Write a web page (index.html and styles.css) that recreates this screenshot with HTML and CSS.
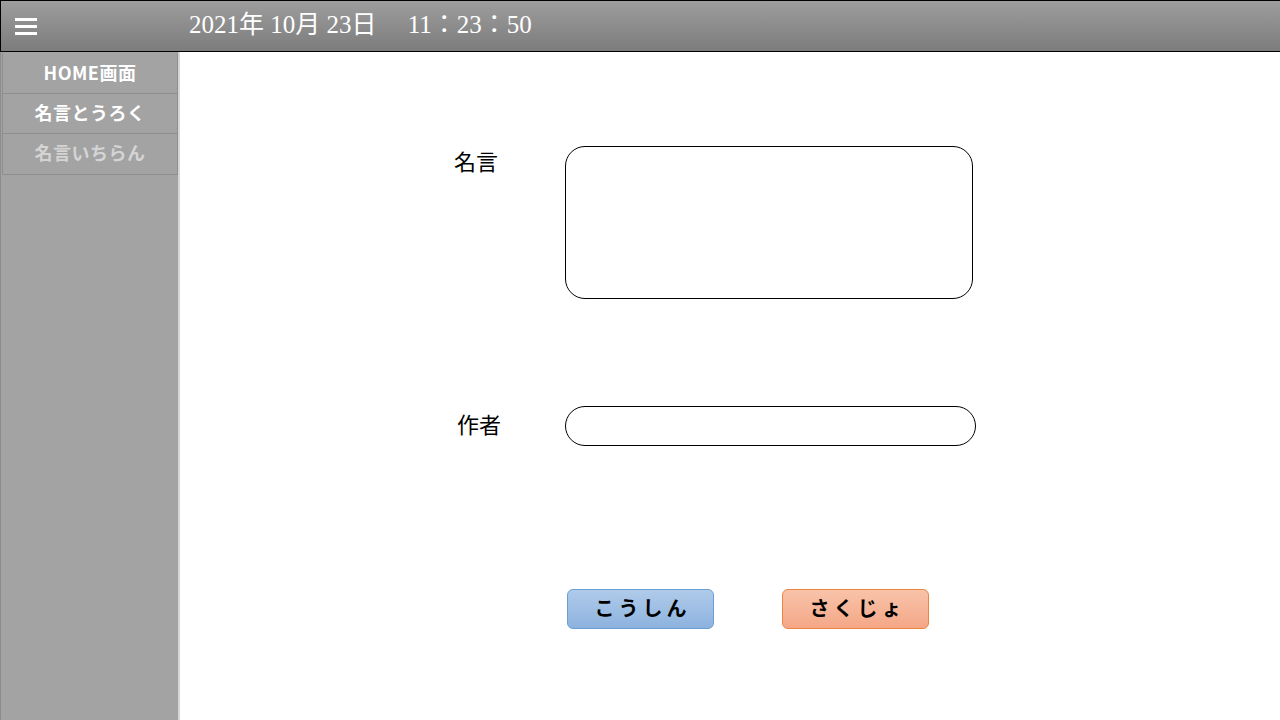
FILE: index.html
```html
<!DOCTYPE html>
<html lang="ja">
<head>
<meta charset="utf-8">
<title>名言こうしん</title>
<link rel="stylesheet" href="styles.css">
</head>
<body>
<header class="header">
  <button class="menu-btn" aria-label="menu">
    <span class="bar"></span><span class="bar"></span><span class="bar"></span>
  </button>
  <div class="clock">2021年 10月 23日　 11：23：50</div>
</header>
<div class="layout">
  <nav class="sidebar">
    <a class="nav-item">HOME画面</a>
    <a class="nav-item">名言とうろく</a>
    <a class="nav-item nav-item--dim">名言いちらん</a>
  </nav>
  <main class="main">
    <form class="form">
      <label class="label label--top">名言</label>
      <textarea class="field field--area"></textarea>
      <label class="label label--mid">作者</label>
      <input class="field field--line" type="text">
    </form>
    <div class="actions">
      <button class="btn btn--blue">こうしん</button>
      <button class="btn btn--orange">さくじょ</button>
    </div>
  </main>
</div>
</body>
</html>
```
FILE: styles.css
```css
* { box-sizing: border-box; }
html, body { margin: 0; padding: 0; }
body {
  width: 1280px;
  height: 720px;
  overflow: hidden;
  background: #fff;
  font-family: "Liberation Serif", "Noto Sans CJK JP", serif;
}
.header {
  height: 52px;
  display: flex;
  align-items: center;
  border-top: 1px solid #000;
  border-left: 1px solid #000;
  border-bottom: 1px solid #000;
  background: linear-gradient(#9d9d9d, #7c7c7c);
}
.menu-btn {
  margin-left: 14px;
  padding: 0;
  border: 0;
  background: none;
  display: flex;
  flex-direction: column;
  gap: 4px;
  width: 22px;
}
.bar { display: block; height: 3px; width: 22px; background: #fff; }
.clock {
  margin-left: 152px;
  color: #fff;
  font-size: 25px;
  line-height: 1;
  padding-bottom: 3px;
}
.layout { display: flex; height: 668px; }
.sidebar {
  width: 180px;
  flex: none;
  background: #a3a3a3;
  border-left: 1px solid #8c8c8c;
  border-right: 2px solid #d6d6d6;
  padding: 1px 0 0 1px;
  display: flex;
  flex-direction: column;
  font-family: "Noto Sans CJK JP", "Noto Sans", sans-serif;
}
.nav-item {
  height: 41px;
  border: 1px solid #8e8e8e;
  margin-top: -1px;
  display: flex;
  align-items: center;
  justify-content: center;
  color: #fff;
  font-weight: 700;
  font-size: 18px;
  letter-spacing: 0.5px;
  padding-bottom: 4px;
}
.nav-item:first-child { margin-top: 0; border-top-color: transparent; }
.nav-item--dim { color: #d4d4d4; height: 42px; }
.main { flex: 1; padding: 94px 0 0 274px; }
.form {
  display: grid;
  grid-template-columns: 111px 411px;
  row-gap: 107px;
}
.label { font-size: 22px; line-height: 26px; color: #000; }
.label--top { padding-top: 4px; }
.label--mid { align-self: center; padding-left: 3px; }
.field {
  border: 1px solid #000;
  background: #fff;
  font: inherit;
  outline: none;
}
.field--area { width: 408px; height: 153px; border-radius: 20px; resize: none; }
.field--line { width: 411px; height: 40px; border-radius: 20px; }
.actions { display: flex; gap: 68px; margin: 143px 0 0 113px; }
.btn {
  width: 147px;
  height: 40px;
  border-radius: 6px;
  font-family: "Noto Sans CJK JP", sans-serif;
  font-weight: 700;
  font-size: 20px;
  letter-spacing: 4px;
  color: #000;
  padding: 0 0 4px 4px;
}
.btn--blue { background: linear-gradient(#b0cbea, #8db2df); border: 1px solid #6a9fd6; }
.btn--orange { background: linear-gradient(#f8c3aa, #f4a787); border: 1px solid #ee8440; }
```
